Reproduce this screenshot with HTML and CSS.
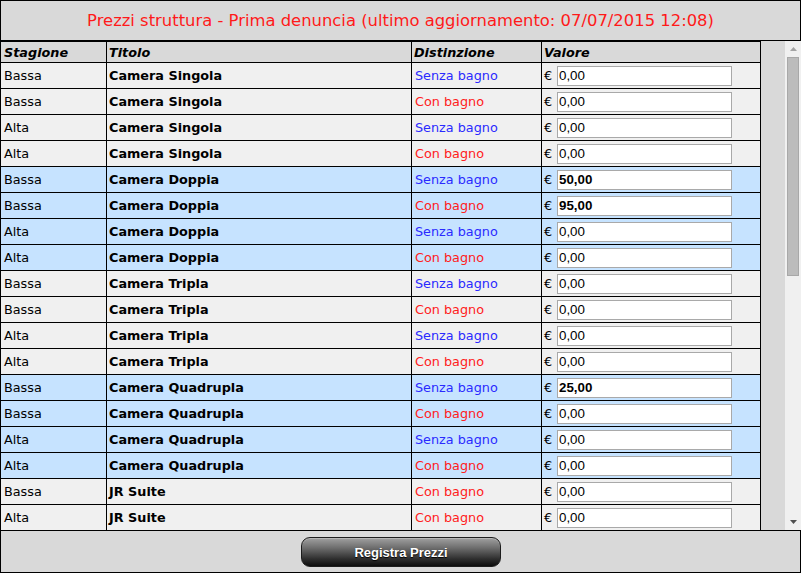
FILE: index.html
```html
<!DOCTYPE html>
<html lang="it">
<head>
<meta charset="utf-8">
<title>Prezzi struttura</title>
<link rel="stylesheet" href="styles.css">
</head>
<body>
<div class="panel">
  <div class="title">Prezzi struttura - Prima denuncia (ultimo aggiornamento: 07/07/2015 12:08)</div>
  <div class="scroller">
    <div class="viewport">
      <table class="prices">
        <colgroup>
          <col class="c1"><col class="c2"><col class="c3"><col class="c4">
        </colgroup>
        <thead>
          <tr><th>Stagione</th><th>Titolo</th><th>Distinzione</th><th>Valore</th></tr>
        </thead>
        <tbody>
          <tr class="gray"><td>Bassa</td><td class="name">Camera Singola</td><td class="senza">Senza bagno</td><td><div class="val"><span class="eur">€</span><input class="price" value="0,00"></div></td></tr>
          <tr class="gray"><td>Bassa</td><td class="name">Camera Singola</td><td class="con">Con bagno</td><td><div class="val"><span class="eur">€</span><input class="price" value="0,00"></div></td></tr>
          <tr class="gray"><td>Alta</td><td class="name">Camera Singola</td><td class="senza">Senza bagno</td><td><div class="val"><span class="eur">€</span><input class="price" value="0,00"></div></td></tr>
          <tr class="gray"><td>Alta</td><td class="name">Camera Singola</td><td class="con">Con bagno</td><td><div class="val"><span class="eur">€</span><input class="price" value="0,00"></div></td></tr>
          <tr class="blue"><td>Bassa</td><td class="name">Camera Doppia</td><td class="senza">Senza bagno</td><td><div class="val"><span class="eur">€</span><input class="price set" value="50,00"></div></td></tr>
          <tr class="blue"><td>Bassa</td><td class="name">Camera Doppia</td><td class="con">Con bagno</td><td><div class="val"><span class="eur">€</span><input class="price set" value="95,00"></div></td></tr>
          <tr class="blue"><td>Alta</td><td class="name">Camera Doppia</td><td class="senza">Senza bagno</td><td><div class="val"><span class="eur">€</span><input class="price" value="0,00"></div></td></tr>
          <tr class="blue"><td>Alta</td><td class="name">Camera Doppia</td><td class="con">Con bagno</td><td><div class="val"><span class="eur">€</span><input class="price" value="0,00"></div></td></tr>
          <tr class="gray"><td>Bassa</td><td class="name">Camera Tripla</td><td class="senza">Senza bagno</td><td><div class="val"><span class="eur">€</span><input class="price" value="0,00"></div></td></tr>
          <tr class="gray"><td>Bassa</td><td class="name">Camera Tripla</td><td class="con">Con bagno</td><td><div class="val"><span class="eur">€</span><input class="price" value="0,00"></div></td></tr>
          <tr class="gray"><td>Alta</td><td class="name">Camera Tripla</td><td class="senza">Senza bagno</td><td><div class="val"><span class="eur">€</span><input class="price" value="0,00"></div></td></tr>
          <tr class="gray"><td>Alta</td><td class="name">Camera Tripla</td><td class="con">Con bagno</td><td><div class="val"><span class="eur">€</span><input class="price" value="0,00"></div></td></tr>
          <tr class="blue"><td>Bassa</td><td class="name">Camera Quadrupla</td><td class="senza">Senza bagno</td><td><div class="val"><span class="eur">€</span><input class="price set" value="25,00"></div></td></tr>
          <tr class="blue"><td>Bassa</td><td class="name">Camera Quadrupla</td><td class="con">Con bagno</td><td><div class="val"><span class="eur">€</span><input class="price" value="0,00"></div></td></tr>
          <tr class="blue"><td>Alta</td><td class="name">Camera Quadrupla</td><td class="senza">Senza bagno</td><td><div class="val"><span class="eur">€</span><input class="price" value="0,00"></div></td></tr>
          <tr class="blue"><td>Alta</td><td class="name">Camera Quadrupla</td><td class="con">Con bagno</td><td><div class="val"><span class="eur">€</span><input class="price" value="0,00"></div></td></tr>
          <tr class="gray"><td>Bassa</td><td class="name">JR Suite</td><td class="con">Con bagno</td><td><div class="val"><span class="eur">€</span><input class="price" value="0,00"></div></td></tr>
          <tr class="gray"><td>Alta</td><td class="name">JR Suite</td><td class="con">Con bagno</td><td><div class="val"><span class="eur">€</span><input class="price" value="0,00"></div></td></tr>
        </tbody>
      </table>
    </div>
    <div class="scrollbar">
      <div class="sb-btn"><svg width="7" height="4" viewBox="0 0 7 4"><polygon points="0,4 7,4 3.5,0" fill="#a3a3a3"/></svg></div>
      <div class="thumb"></div>
      <div class="sb-space"></div>
      <div class="sb-btn"><svg width="7" height="4" viewBox="0 0 7 4"><polygon points="0,0 7,0 3.5,4" fill="#505050"/></svg></div>
    </div>
  </div>
  <div class="footer">
    <button class="btn" type="button">Registra Prezzi</button>
  </div>
</div>
</body>
</html>
```
FILE: styles.css
```css
html, body {
  margin: 0;
  padding: 0;
  background: #ffffff;
}

body {
  font-family: "DejaVu Sans", Verdana, sans-serif;
  font-size: 12.8px;
  color: #000;
}

.panel {
  width: 801px;
  height: 573px;
  display: flex;
  flex-direction: column;
}

.title {
  flex: none;
  height: 39px;
  border: 1px solid #000;
  background: #d9d9d9;
  color: #ff1a1a;
  font-size: 16.4px;
  display: flex;
  align-items: center;
  justify-content: center;
}

.scroller {
  flex: none;
  height: 489px;
  display: flex;
  background: #d9d9d9;
}

.viewport {
  width: 785px;
  height: 489px;
  overflow: hidden;
}

.prices {
  border-collapse: separate;
  border-spacing: 0;
  table-layout: fixed;
  width: 761px;
  border-left: 1px solid #000;
  border-top: 1px solid #000;
}

.c1 { width: 106px; }
.c2 { width: 305px; }
.c3 { width: 130px; }
.c4 { width: 219px; }

.prices th,
.prices td {
  border-right: 1px solid #000;
  border-bottom: 1px solid #000;
  padding: 0 2px;
  text-align: left;
  vertical-align: middle;
  white-space: nowrap;
  overflow: hidden;
  line-height: 15px;
}

.prices th:first-child,
.prices td:first-child {
  padding-left: 3px;
}

.prices td.senza,
.prices td.con {
  padding-left: 3px;
}

.prices thead tr {
  height: 21px;
}

.prices th {
  font-weight: bold;
  font-style: italic;
  background: #d9d9d9;
}

.prices tbody tr {
  height: 26px;
}

.gray td { background: #f0f0f0; }
.blue td { background: #c6e3ff; }

.name { font-weight: bold; }
.senza { color: #2a2aff; }
.con { color: #ff2020; }

.val {
  display: flex;
  align-items: center;
}

.eur {
  width: 13px;
  flex: none;
}

.price {
  box-sizing: border-box;
  width: 175px;
  height: 20px;
  margin: 0;
  padding: 0 1px;
  border: 1px solid #a9a9a9;
  background: #fff;
  font-family: "Liberation Sans", Arial, sans-serif;
  font-size: 13.33px;
  color: #000;
  outline: none;
}

.price.set {
  font-weight: bold;
}

.scrollbar {
  width: 16px;
  flex: none;
  background: #f0f0f0;
  display: flex;
  flex-direction: column;
  align-items: center;
}

.sb-btn {
  height: 16px;
  width: 16px;
  display: flex;
  align-items: center;
  justify-content: center;
}

.sb-btn svg {
  display: block;
}

.thumb {
  box-sizing: border-box;
  width: 12px;
  height: 219px;
  background: #bcbcbc;
  border: 1px solid #a8a8a8;
}

.sb-space {
  flex: 1;
}

.footer {
  flex: none;
  height: 41px;
  border: 1px solid #000;
  background: #d9d9d9;
  display: flex;
  align-items: center;
  justify-content: center;
}

.btn {
  box-sizing: border-box;
  width: 200px;
  height: 30px;
  margin: 1px 0 0 1px;
  border: 1px solid #1c1c1c;
  border-radius: 9px;
  background: linear-gradient(to bottom, #a0a0a0 0%, #6e6e6e 35%, #2e2e2e 75%, #0c0c0c 100%);
  box-shadow: inset 0 1px 0 rgba(255, 255, 255, 0.25);
  color: #fff;
  font-family: "Liberation Sans", Arial, sans-serif;
  font-weight: bold;
  font-size: 13px;
  text-shadow: 0 1px 1px #000;
  padding: 0;
}
```
